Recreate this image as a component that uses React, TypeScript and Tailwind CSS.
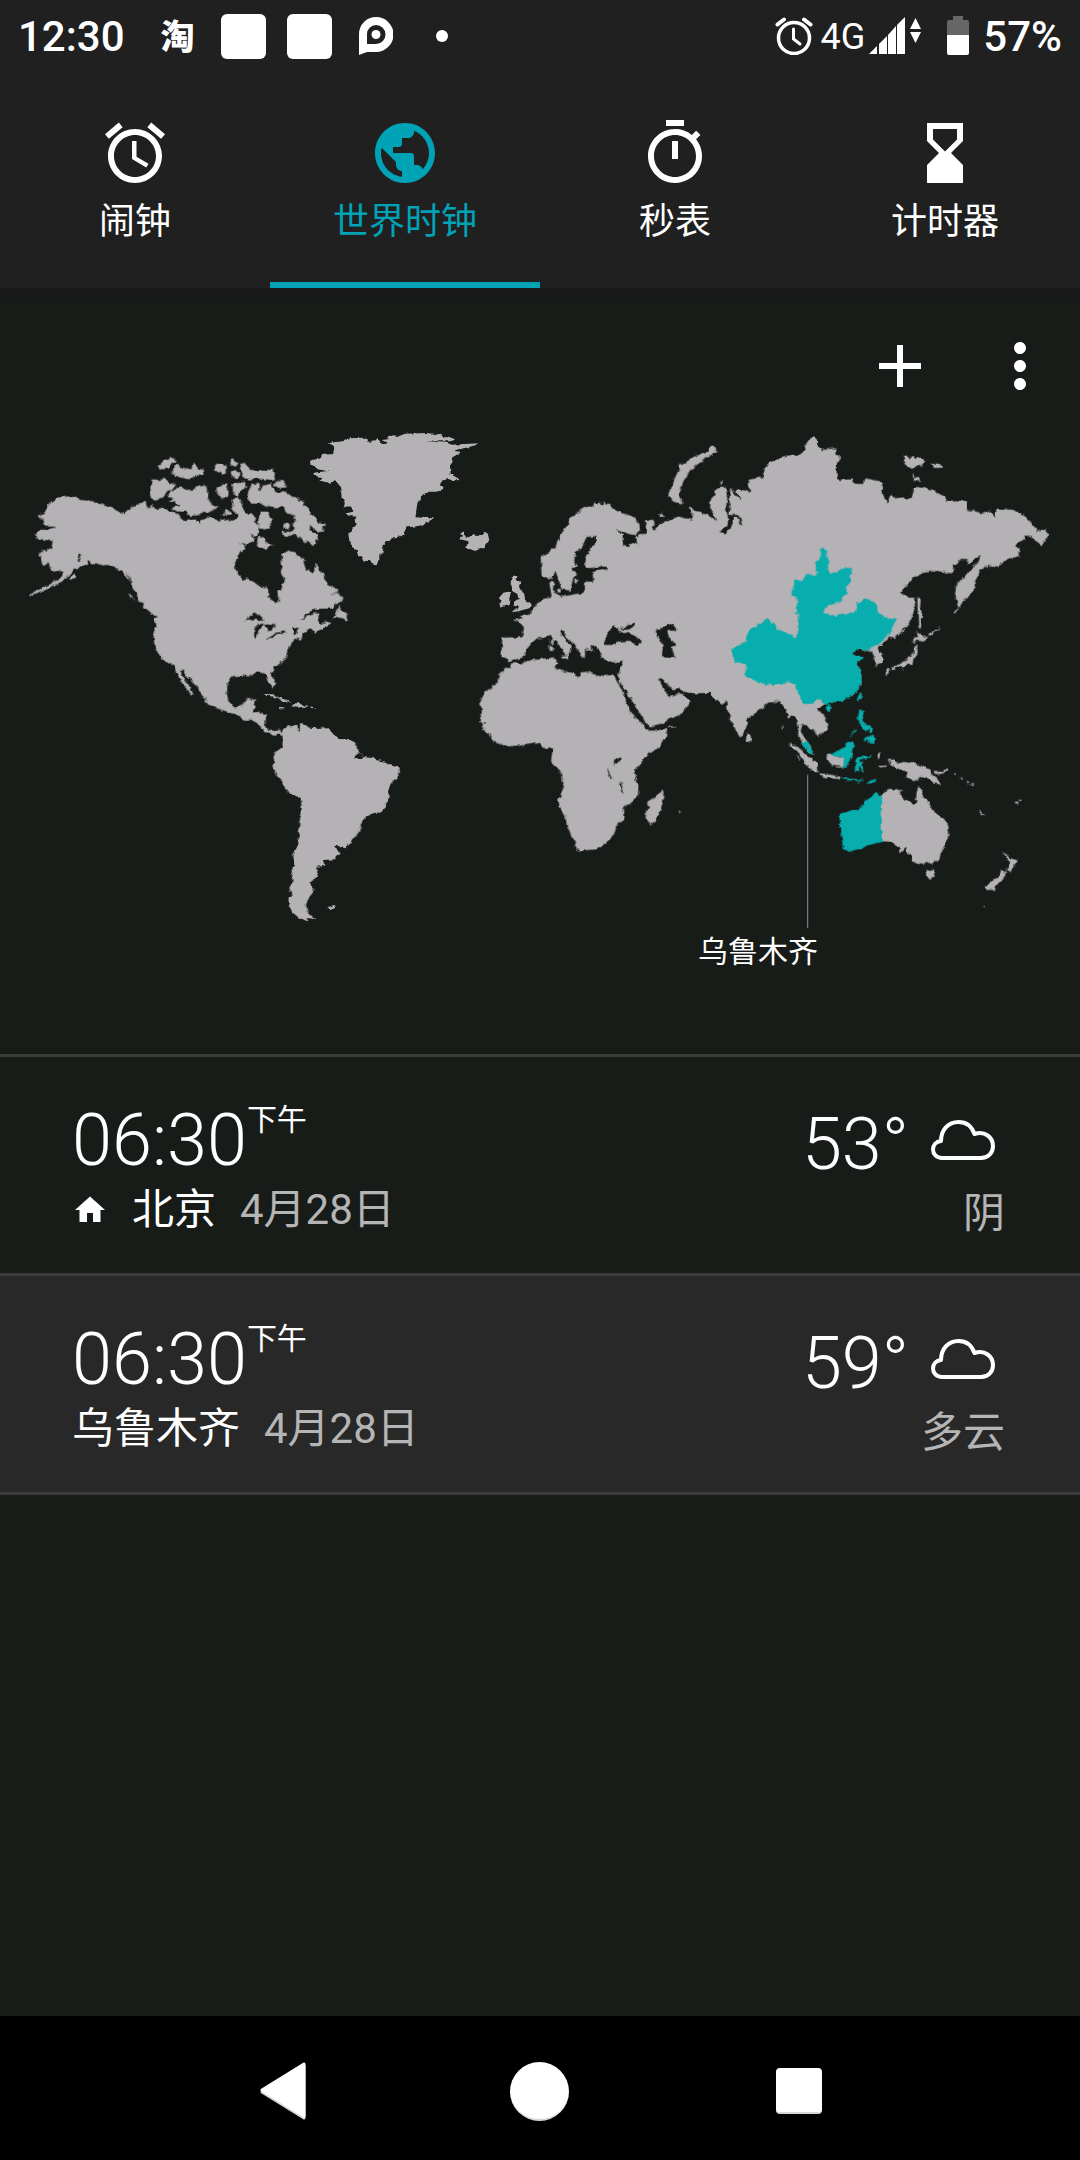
import { useState } from 'react';
import { MdAdd, MdAlarm, MdHourglassBottom, MdMoreVert, MdOutlineTimer, MdPublic } from 'react-icons/md';

const tabs = [
  { id: 'alarm', title: '闹钟', Icon: MdAlarm },
  { id: 'world', title: '世界时钟', Icon: MdPublic },
  { id: 'stopwatch', title: '秒表', Icon: MdOutlineTimer },
  { id: 'timer', title: '计时器', Icon: MdHourglassBottom },
];

interface City {
  name: string;
  time: string;
  period: string;
  date: string;
  temp: string;
  weather: string;
  home: boolean;
}

const cities: City[] = [
  { name: '北京', time: '06:30', period: '下午', date: '4月28日', temp: '53°', weather: '阴', home: true },
  { name: '乌鲁木齐', time: '06:30', period: '下午', date: '4月28日', temp: '59°', weather: '多云', home: false },
];

// 地图分块，每块有自己的原点；land 为陆地，sea 为湖泊和内海，active 为当前时区
interface Region {
  id: string;
  x: number;
  y: number;
  land: string[];
  sea?: string[];
  islands?: string[];
  active?: string[];
}

const regions: Region[] = [
  {
    id: 'north-america',
    x: 0,
    y: 0,
    land: [
      '195,286 200,294 210,290 230,293 240,300 262,302 280,308 295,308 315,318 330,320 345,330 365,338 376,342 380,332 400,318 418,312 425,312 436,304 440,318 448,326 455,312 462,326 485,320 510,334 520,336 535,345 545,358 560,360 580,356 595,364 598,376 602,362 625,352 645,358 665,362 690,360 700,362 712,356 715,340 700,334 694,325 700,315 697,300 712,290 722,305 728,325 742,345 752,342 765,352 762,365 775,375 778,390 770,410 748,400 765,415 755,425 745,430 715,430 738,436 735,448 722,452 712,470 705,490 706,512 722,528 724,540 740,535 760,545 780,560 800,562 808,575 806,590 815,600 828,610 837,603 832,575 845,565 852,535 842,515 848,500 845,490 846,470 840,458 855,458 870,453 885,458 900,476 915,480 912,492 918,508 935,518 945,510 950,490 958,508 968,520 975,540 985,555 1000,562 1015,568 1013,578 988,584 1015,580 1027,595 1022,606 1005,612 1000,625 960,626 935,632 915,644 900,662 925,648 940,640 958,640 950,658 960,672 980,664 992,670 975,678 968,690 945,698 942,686 920,692 908,702 905,718 885,716 875,725 872,735 862,740 862,755 858,775 840,790 825,800 818,808 814,822 825,850 820,866 810,855 803,835 797,824 785,818 765,818 758,825 742,830 735,826 715,828 700,828 690,836 683,850 680,880 684,900 690,912 705,922 720,916 730,914 738,898 768,896 764,918 755,940 780,938 796,942 799,950 795,980 810,994 825,990 840,990 850,1000 845,1008 835,1000 822,1008 812,1002 795,994 782,982 775,972 755,960 735,960 722,950 705,942 680,938 650,925 618,908 615,895 600,878 590,862 575,842 562,830 552,812 540,812 548,825 560,848 572,866 581,885 572,882 562,870 547,850 540,848 545,840 530,820 522,798 515,792 495,785 478,765 465,745 460,705 466,680 462,655 474,650 462,635 445,622 430,618 425,605 412,600 410,580 398,565 390,545 375,528 368,512 350,508 345,500 325,495 305,496 290,490 275,490 265,480 258,494 245,498 235,508 225,505 215,518 195,538 185,545 150,562 120,575 100,584 88,594 95,580 130,562 165,545 185,530 190,515 172,512 160,515 152,508 145,485 138,498 130,495 127,482 115,465 130,450 140,452 155,440 158,425 150,418 132,422 115,420 110,405 100,402 120,390 155,388 168,382 150,376 140,378 133,372 130,360 112,348 135,338 145,315 165,298 185,292',
      '428,617 445,620 462,628 476,650 462,646 448,634',
    ],
    sea: [
      '728,665 745,652 755,645 765,640 785,650 790,665 778,660 768,655 755,662 745,658',
      '762,685 775,672 792,672 785,682 775,690 772,712 765,716 762,705',
      '792,675 802,670 820,672 828,685 820,680 812,697 804,692 800,682',
      '798,716 815,706 830,698 858,690 858,697 835,702 820,713',
      '880,685 896,682 894,692 888,708 880,705',
      '240,460 246,464 238,480 232,484',
      '375,512 382,525 390,548 395,560 392,545 386,528',
    ],
    islands: [
      '458,238 480,240 492,236 510,248 528,256 515,270 500,272 492,290 468,302 450,288',
      '505,290 508,275 532,264 545,262 560,270 580,268 598,255 606,264 612,254 620,262 622,285 628,300 635,315 655,322 640,328 625,338 610,335 600,345 570,348 555,335 530,334 512,322 540,318 528,308 510,305 520,295',
      '472,200 485,188 495,178 505,180 512,170 528,172 528,188 512,192 505,205 490,208',
      '512,222 522,205 530,195 545,202 560,205 575,210 578,188 590,196 595,206 612,210 610,228 590,226 570,238 540,232 525,226',
      '645,192 665,190 680,196 680,218 665,228 660,215 645,212',
      '688,180 700,178 716,188 708,200 692,195',
      '720,192 735,188 746,200 745,210 790,212 820,208 828,235 820,242 800,238 770,235 750,238 730,234',
      '692,215 702,210 718,218 716,235 695,230',
      '650,262 662,258 668,250 685,252 680,270 688,288 665,298 650,278',
      '697,252 735,246 738,262 722,272 712,290 700,282',
      '745,270 760,252 780,252 778,268 785,295 778,300 780,275 788,258 815,250 820,262 828,278 860,275 872,290 892,292 900,302 915,302 912,315 925,325 930,340 945,350 955,368 978,372 965,385 970,392 955,398 930,375 930,388 952,405 955,420 945,418 948,432 940,438 920,424 915,430 895,408 880,402 860,408 842,402 846,394 875,396 884,385 880,372 888,360 880,345 862,345 850,320 830,325 800,320 790,312 750,310 742,292',
      '825,245 850,243 862,262 835,264 822,255',
      '780,335 810,335 808,350 820,358 808,370 810,385 795,388 778,385 772,360',
      '778,410 790,412 798,425 820,438 805,440 800,448 785,440 770,442',
      '660,345 672,342 680,325 696,344',
      '850,370 862,368 870,378 864,388 850,385',
      '1018,613 1014,632 1008,638 998,658 1018,652 1030,655 1040,662 1047,656 1040,652 1040,638 1025,635 1020,625',
      '210,530 225,524 228,532 212,540',
      '385,578 392,580 402,600 394,592',
    ],
  },
  {
    id: 'north-atlantic',
    x: 780,
    y: 0,
    land: [
      '203,130 230,126 255,122 265,115 318,113 322,125 348,124 352,113 358,125 372,133 380,128 365,120 385,118 388,108 408,106 412,110 435,101 500,99 540,103 545,110 560,108 585,118 575,124 500,124 560,128 575,134 655,130 645,136 625,142 600,148 582,156 602,158 595,168 582,166 575,178 578,188 570,200 572,222 582,222 595,240 575,244 560,238 545,242 540,255 550,270 528,275 510,275 485,285 472,310 466,352 495,354 525,352 505,365 490,375 460,380 440,382 430,402 410,415 395,415 390,422 372,428 368,455 358,462 358,480 350,493 335,488 325,480 315,485 295,465 290,450 280,445 275,430 268,422 265,400 275,395 275,382 288,378 284,360 290,350 270,348 258,340 280,335 268,322 252,325 255,302 245,290 240,262 225,240 215,248 195,246 175,240 185,232 162,225 160,218 210,212 170,205 152,192 150,182 180,175 185,165 218,162 225,140',
      '600,400 612,398 614,408 625,412 640,404 665,405 675,398 684,405 688,420 675,440 645,453 632,448 612,440 624,432 612,422 598,415 610,412',
      '755,532 772,528 770,540 784,545 778,560 790,580 792,598 812,612 808,625 780,632 758,637 775,620 762,616 768,600 776,598 772,582 760,574 752,550',
      '730,578 752,574 750,590 746,612 722,620 718,612 728,602 716,595',
    ],
  },
  {
    id: 'africa',
    x: 1350,
    y: 720,
    land: [
      '183,70 215,70 240,60 270,58 315,52 322,68 313,82 345,95 365,98 385,112 393,97 415,95 430,102 465,108 490,104 497,118 515,150 530,190 545,222 562,240 578,250 590,272 620,272 652,265 648,290 630,318 585,352 560,385 552,400 558,425 565,435 564,468 545,485 518,505 522,540 498,556 497,572 482,595 455,620 440,628 390,632 380,628 376,610 370,595 352,562 345,525 328,498 325,480 342,440 335,425 333,398 318,380 303,365 308,325 298,318 290,325 275,322 270,308 245,308 215,316 165,320 145,310 125,297 118,283 100,266 88,240 96,215 90,188 108,155 125,140 138,130 148,115 150,98 170,85 182,78',
      '635,448 643,470 630,515 618,545 602,553 587,535 588,510 597,500 592,485 620,470',
      '685,515 692,515 690,520',
      '655,260 680,258 678,262 660,263',
    ],
    sea: [
      '492,355 512,352 510,362 502,374 492,372',
      '472,380 478,398 486,418 480,415 474,395',
      '510,426 517,432 516,448 521,462 514,455',
      '90,249 110,250 112,253 92,253',
    ],
  },
  {
    id: 'south-america',
    x: 600,
    y: 780,
    land: [
      '246,212 262,200 275,198 290,194 296,208 302,204 298,192 318,196 328,203 345,205 375,202 390,214 405,228 415,237 440,238 460,246 470,258 472,275 490,288 520,292 525,300 560,305 578,318 598,322 600,340 592,352 568,380 565,415 555,440 542,457 520,460 500,468 487,482 485,500 465,530 450,552 438,562 405,557 418,578 405,598 372,600 372,618 348,620 355,640 345,660 330,666 332,680 345,690 325,715 318,735 322,755 345,776 320,775 325,785 295,772 280,760 268,740 265,715 275,708 268,685 278,672 275,630 282,620 280,585 295,550 298,490 305,455 303,418 265,398 240,360 225,330 216,318 226,305 220,295 228,275 247,262 248,235',
      '188,108 200,102 218,103 250,116 272,128 248,126 235,114 212,108',
      '280,130 300,130 322,140 305,140 290,143 276,138',
      '240,140 252,142 252,146 240,144',
      '332,140 344,141 342,145 332,144',
      '385,742 400,735 411,738 395,746 388,744',
    ],
    sea: ['462,290 475,280 490,288 485,296 465,294', '293,198 300,200 298,212 293,208'],
  },
  {
    id: 'europe',
    x: 1410,
    y: 0,
    land: [
      '345,322 370,318 372,306 380,315 388,304 395,316 402,304 408,314 420,315 440,333 475,345 492,352 508,372 510,390 495,405 475,402 438,384 458,402 458,430 468,440 480,440 476,428 505,432 498,412 508,402 532,402 528,360 550,360 555,372 545,378 550,392 570,372 595,360 625,350 665,358 670,345 655,320 665,322 672,332 690,335 715,347 738,362 730,338 720,325 722,300 735,288 738,270 750,258 768,262 772,290 785,262 795,290 815,300 795,275 810,268 840,275 858,290 855,320 863,305 855,285 840,270 835,240 885,232 880,210 895,200 900,188 920,180 945,168 990,165 1008,150 1005,138 1020,118 1030,113 1045,125 1040,135 1055,150 1100,148 1100,800 1000,870 722,876 640,876 600,885 580,865 480,870 450,830 462,822 468,780 430,788 395,775 388,752 375,738 360,742 372,755 352,750 345,745 345,775 332,765 318,742 322,738 300,722 285,708 282,692 270,692 280,712 305,740 300,762 285,765 278,745 250,720 240,705 225,712 200,715 180,735 168,745 165,768 150,775 120,785 110,778 95,772 97,712 155,712 162,682 150,668 132,660 155,655 150,648 175,645 205,610 215,598 245,590 238,548 250,540 245,532 232,536 215,528 212,475 235,455 255,442 275,400 290,378 305,350 325,335',
      '735,140 740,155 715,170 690,188 665,205 650,225 635,255 628,285 642,310 625,308 610,305 597,288 605,262 612,245 618,225 630,205 628,195 655,182 680,165 710,155 720,140',
      '568,342 578,338 582,348 570,352',
      '240,718 248,716 248,732 240,732',
      '238,738 248,736 250,752 240,756',
      '272,768 298,764 296,778 280,774',
      '752,245 757,242 758,250 750,250',
    ],
    sea: [
      '256,512 268,545 276,568 300,572 308,542 322,522 306,512 306,500 324,500 312,482 318,455 335,445 345,420 352,409 375,409 378,428 355,455 345,490 352,505 390,500 412,500 415,507 388,512 368,516 370,545 358,545 345,545 344,572 330,580 275,590 250,576 254,550 246,540',
      '400,735 412,702 432,678 445,690 462,700 475,696 510,718 512,732 500,735 475,722 452,724 430,735',
      '445,684 465,684 475,672 494,670 480,688 465,690',
      '558,688 575,684 598,670 612,676 620,692 605,688 592,695 600,720 618,735 605,740 614,775 580,772 575,760 582,738 565,712',
      '568,836 585,840 598,862 612,870 630,865 640,880 660,892 640,890 630,880 615,888 598,884 588,866 574,856',
      '768,262 778,275 780,300 775,345 805,345 815,368 818,378 808,365 800,352 788,352 788,372 768,400 748,396 772,378 775,358 768,325 772,300',
    ],
    islands: ['312,545 318,535 324,538 318,552', '258,568 272,566 272,578 260,576'],
  },
  {
    id: 'arabia',
    x: 1350,
    y: 720,
    land: [
      '505,105 520,55 780,55 800,100 812,185 800,180 778,157 740,160 710,157 690,145 700,165 722,182 708,208 680,228 640,248 596,262 582,240 575,222 560,208 552,188 535,168 515,135 512,125 508,138',
    ],
    sea: ['628,116 640,115 655,140 668,148 690,143 702,160 680,162 660,168 645,158 636,138'],
  },
  {
    id: 'siberia',
    x: 2160,
    y: 0,
    land: [
      '90,240 130,232 130,210 150,188 200,168 240,165 258,148 255,138 270,115 285,113 295,125 290,135 305,152 335,145 355,165 358,182 345,205 325,225 300,242 282,264 305,250 340,232 360,240 395,238 405,252 430,252 440,235 485,245 490,290 503,307 513,284 520,292 545,290 560,298 575,292 585,260 620,265 650,272 660,285 675,292 680,305 735,303 742,312 742,335 760,332 790,340 810,333 825,352 830,325 880,330 905,345 925,358 950,388 955,395 975,388 980,398 990,405 975,422 965,437 940,415 915,403 912,418 888,432 895,445 900,467 870,475 850,485 830,503 810,497 785,505 775,525 765,540 768,560 755,575 742,595 730,602 715,627 705,580 710,550 725,540 750,510 775,488 782,466 765,472 760,485 740,497 742,480 720,480 702,498 695,520 650,513 600,520 575,540 540,578 560,590 582,590 585,620 575,655 550,690 525,717 505,712 490,730 475,740 478,752 488,765 488,790 468,797 465,770 450,750 430,756 420,740 395,760 415,775 410,790 425,825 425,850 400,885 360,895 -20,850 90,400',
      '592,590 602,598 600,622 610,652 600,656 604,680 595,682 593,640',
      '592,692 605,705 625,712 605,725 590,718 580,730 580,716 592,710',
      '580,738 592,735 592,765 582,772 578,792 560,792 550,805 540,798 515,804 545,786 560,782 565,772 580,762',
      '495,808 508,806 505,820 500,830',
      '512,800 528,797 525,806 515,810',
      '552,168 562,166 568,178 582,168 588,178 600,172 616,185 605,200 592,196 575,207 553,192',
      '630,188 660,192 668,203 645,204',
      '580,235 595,230 604,246 582,242',
      '578,222 584,222 584,230 578,230',
      '625,702 660,682 662,685 628,708',
      '700,638 712,626 714,630 704,640',
    ],
  },
  {
    id: 'asia-pacific',
    x: 2100,
    y: 720,
    land: [
      '-40,60 380,60 400,187 375,192 352,208 360,218 378,235 384,268 352,288 345,275 330,268 318,254 306,252 302,275 318,300 330,315 340,345 322,335 306,302 294,285 297,265 290,235 282,226 265,235 258,212 236,180 225,186 205,187 190,200 165,220 142,235 138,265 120,293 108,272 85,222 78,180 70,195 62,192 48,178 30,158 -40,157',
      '140,282 150,286 155,300 148,308 138,304',
      '266,312 290,316 320,345 352,370 356,395 345,397 325,380 310,362 295,340',
      '355,400 385,402 405,407 425,412 420,418 385,413 358,408',
      '380,342 392,340 402,348 428,350 434,372 425,380 400,378 385,364',
      '562,360 585,358 592,372 610,366 650,372 688,388 692,400 710,415 725,433 700,430 680,412 660,412 655,422 635,418 618,412 625,398 605,388 592,385 570,375 572,368',
      '700,396 728,395 738,384 742,390 728,402 705,402',
      '532,345 540,335 542,350 536,360',
      '535,378 560,376 560,380 538,382',
      '540,474 552,455 570,445 578,452 605,450 600,468 615,480 640,492 648,485 650,455 656,437 665,455 670,472 682,480 690,503 712,520 735,540 745,558 748,590 735,620 722,640 718,660 690,672 680,665 672,672 645,667 635,655 635,642 620,638 618,620 602,637 595,620 580,610 560,604 540,604',
      '675,690 690,693 705,688 705,705 690,720 682,710',
      '908,630 920,645 930,655 938,655 953,662 945,675 932,697 918,690 925,680 928,668 920,655',
      '905,690 918,695 915,708 895,730 885,750 865,750 856,742 870,728 895,710',
      '834,510 842,513 858,525 850,525',
      '945,488 955,487 955,493 946,493',
      '955,482 965,478 965,482 957,485',
      '760,398 768,402 766,406',
      '780,410 792,416 790,420',
      '798,420 808,426 804,430',
      '812,428 822,432 820,436',
      '248,250 250,268 245,268',
      '290,345 300,360 296,362',
      '850,797 856,799 852,802',
    ],
    active: [
      '378,200 388,194 396,206 385,216 378,210',
      '476,165 486,158 484,172 476,182 472,175',
      '475,212 490,212 490,235 486,245 502,255 492,258 478,248 470,232',
      '486,255 498,250 512,258 518,275 508,280 505,268 498,278 490,268',
      '488,300 500,290 520,284 525,300 522,310 510,310 505,300',
      '448,290 465,268 468,270 452,290',
      '306,304 325,305 340,345 322,335',
      '388,344 402,340 418,330 430,320 445,305 458,308 465,318 456,330 458,348 445,368 440,382 426,384 432,372 428,350 402,348',
      '465,365 472,350 505,350 515,343 512,352 480,358 478,365 495,364 484,372 495,395 486,392 478,376 476,396 465,396',
      '425,412 450,416 490,418 490,422 450,421 428,418',
      '500,430 510,422 530,416 525,424 505,434',
      '470,425 480,428 475,430',
      '545,470 535,462 530,458 520,465 508,475 495,482 488,490 480,505 450,512 422,522 416,530 420,550 418,560 425,580 430,605 430,628 448,636 470,628 490,626 510,615 545,605',
    ],
  },
  {
    id: 'china',
    x: 2220,
    y: 720,
    land: [],
    active: [
      '250,-280 258,-275 262,-250 268,-235 262,-215 270,-203 290,-202 300,-212 310,-215 318,-220 332,-216 335,-204 342,-198 330,-190 332,-175 325,-165 318,-155 324,-140 305,-130 300,-115 275,-105 255,-96 252,-82 285,-72 330,-80 345,-85 352,-112 380,-123 405,-112 415,-82 430,-72 445,-65 472,-62 460,-45 452,-25 420,10 385,28 370,36 365,20 335,40 352,50 370,50 350,72 365,102 365,128 355,148 340,165 310,182 280,187 258,195 245,180 228,178 215,188 195,190 178,172 172,150 165,135 145,125 130,132 100,137 72,132 40,120 10,105 20,90 15,72 -15,65 -30,30 20,5 25,-28 40,-34 52,-48 62,-46 78,-65 100,-50 110,-35 140,-22 168,-5 175,-40 178,-78 160,-80 172,-86 170,-95 175,-120 152,-132 160,-148 163,-180 185,-182 205,-198 228,-196 230,-204 225,-230 240,-248 240,-270',
    ],
  },
];

function WorldMap() {
  return (
    <svg viewBox="0 78 3240 1506" className="block w-full" role="img" aria-label="世界地图">
      {/* 给海岸线加一点锯齿 */}
      <filter id="coast" filterUnits="userSpaceOnUse" x="0" y="78" width="3240" height="1506" colorInterpolationFilters="sRGB">
        <feTurbulence type="fractalNoise" baseFrequency="0.06" numOctaves="2" seed="4" result="noise" />
        <feDisplacementMap in="SourceGraphic" in2="noise" scale="14" xChannelSelector="R" yChannelSelector="G" />
      </filter>
      <g filter="url(#coast)">
        {regions.map((region) => (
          <g key={region.id} transform={`translate(${region.x} ${region.y})`}>
            {region.land.map((points) => (
              <polygon key={points} points={points} fill="#b5b2b5" />
            ))}
            {region.sea?.map((points) => (
              <polygon key={points} points={points} fill="#181c19" />
            ))}
            {region.islands?.map((points) => (
              <polygon key={points} points={points} fill="#b5b2b5" />
            ))}
            {region.active?.map((points) => (
              <polygon key={points} points={points} fill="#08aeae" />
            ))}
          </g>
        ))}
      </g>
      <path d="M2422 1125V1584" stroke="#b5b5b5" strokeWidth="3" />
    </svg>
  );
}

function StatusBar() {
  return (
    <div className="flex h-[72px] items-center justify-between px-[18px] text-[42px] font-medium leading-[72px]">
      <div className="flex items-center">
        <span className="pt-0.5">12:30</span>
        <span className="ml-9 pt-0.5 text-[34px] font-black">淘</span>
        <span className="ml-[26px] size-[45px] rounded-md bg-white" />
        <span className="ml-[21px] size-[45px] rounded-md bg-white" />
        <svg viewBox="0 0 34 38" className="ml-[27px] h-[38px] w-[34px]" aria-hidden="true">
          <path
            fillRule="evenodd"
            fill="#fff"
            d="M17 0a17 17 0 0 1 0 35H8L0 38V17A17 17 0 0 1 17 0ZM17 8a9 9 0 0 0-9 9v10h9a9.500 9.500 0 0 0 0-19Z"
          />
          <circle cx="17" cy="17.500" r="4.500" fill="#fff" />
        </svg>
        <span className="ml-[43px] size-3 rounded-full bg-white" />
      </div>
      <div className="flex items-center">
        <svg viewBox="0 0 38 38" className="size-[38px]" fill="none" stroke="#fff" strokeLinecap="round" aria-hidden="true">
          <ellipse cx="19" cy="21" rx="15.500" ry="15.500" strokeWidth="3.500" />
          <path d="M18.500 12v10l6.500 5" strokeWidth="3" />
          <path d="M2.500 7.500 9 2.500M35.500 7.500 29 2.500" strokeWidth="4" />
        </svg>
        <span className="ml-2 pt-0.5 text-[36px] font-normal">4G</span>
        <svg viewBox="0 0 54 38" className="ml-1 h-[38px] w-[54px]" fill="#fff" aria-hidden="true">
          <path d="M0 37 8 29v8ZM10 27l8-8v18h-8ZM19 18l8-9v28h-8ZM28 8l8-8v37h-8Z" />
          <path d="M41 12 46.500 1 52 12ZM41 15h11l-5.500 11Z" />
        </svg>
        <svg viewBox="0 0 22 40" className="ml-6 h-10 w-[22px]" aria-hidden="true">
          <path d="M6 0h10v4h4a2 2 0 0 1 2 2v14H0V6a2 2 0 0 1 2-2h4Z" fill="#666" />
          <path d="M0 19h22v18a2 2 0 0 1-2 2H2a2 2 0 0 1-2-2Z" fill="#fff" />
        </svg>
        <span className="ml-[14px] pt-0.5">57%</span>
      </div>
    </div>
  );
}

function CloudIcon() {
  return (
    <svg viewBox="0 0 64 42" className="mt-4 h-[42px] w-16" fill="none" stroke="#fff" strokeWidth="4" aria-hidden="true">
      <path
        strokeLinejoin="round"
        d="M11 39C5.500 39 2 35 2 30.500C2 26 5 22.500 10 22C10 11 17 3 27.500 3C36 3 41 8 43.500 15C54 11.500 62 18.500 62 27C62 34 57 39 50 39Z"
      />
    </svg>
  );
}

function CityRow({ city }: { city: City }) {
  return (
    <li
      className={`flex h-[219px] items-start justify-between border-t-[3px] border-[#3a3d3a] pl-[72px] pr-[75px] ${
        city.home ? 'bg-[#181c19]' : 'bg-[#282828]'
      }`}
    >
      <div className="pt-[42px]">
        <div className="flex items-start">
          <span className="text-[72px] font-light leading-[84px]">{city.time}</span>
          <span className="text-[30px] leading-[42px]">{city.period}</span>
        </div>
        <div className="flex items-center gap-6 text-[42px] leading-[54px]">
          {city.home && (
            <svg viewBox="0 0 24 24" className="size-9" fill="#fff" aria-hidden="true">
              <path d="M10 20v-6h4v6h5v-8h3L12 3 2 12h3v8z" />
            </svg>
          )}
          <span>{city.name}</span>
          <span className="text-[#b5b5b5]">{city.date}</span>
        </div>
      </div>
      <div className="flex flex-col items-end pt-[46px]">
        <div className="flex items-start gap-[22px] pr-[10px]">
          <span className="text-[72px] font-light leading-[84px]">{city.temp}</span>
          <CloudIcon />
        </div>
        <span className="text-[42px] leading-[54px] text-[#b5b5b5]">{city.weather}</span>
      </div>
    </li>
  );
}

export default function App() {
  const [activeTab, setActiveTab] = useState('world');

  return (
    <div className="flex min-h-screen flex-col bg-[#181c19] font-['Roboto','Noto_Sans_CJK_SC',sans-serif] text-white">
      <header className="bg-[#202020]">
        <StatusBar />
        <nav className="grid h-[216px] grid-cols-4">
          {tabs.map(({ id, title, Icon }) => (
            <button
              key={id}
              type="button"
              onClick={() => setActiveTab(id)}
              className={`flex flex-col items-center border-b-[6px] pt-[45px] text-[36px] leading-[66px] ${
                activeTab === id ? 'border-[#00a3b6] text-[#00a3b6]' : 'border-transparent text-white'
              }`}
            >
              <Icon className="size-[72px]" />
              <span>{title}</span>
            </button>
          ))}
        </nav>
      </header>

      <main className="flex-1">
        <div className="h-3 bg-[#191919]" />
        <div className="flex justify-end pt-[6px]">
          <button type="button" aria-label="添加城市" className="flex size-[120px] items-center justify-center">
            <MdAdd className="size-[72px]" />
          </button>
          <button type="button" aria-label="更多" className="flex size-[120px] items-center justify-center">
            <MdMoreVert className="size-[72px]" />
          </button>
        </div>
        <WorldMap />
        <p className="pb-[78px] pr-[262px] text-right text-[30px] leading-[48px]">乌鲁木齐</p>
        <ul className="border-b-[3px] border-[#3a3d3a]">
          {cities.map((city) => (
            <CityRow key={city.name} city={city} />
          ))}
        </ul>
      </main>

      <footer className="grid h-36 grid-cols-3 bg-black px-[14%] pt-[6px]">
        <button type="button" aria-label="返回" className="flex items-center justify-center pl-1">
          <svg viewBox="0 0 46 58" className="h-[58px] w-[46px]" strokeLinejoin="round" aria-hidden="true">
            <path d="M44 4v52L2 30Z" fill="#d8d8d8" stroke="#d8d8d8" strokeWidth="3" />
            <path d="M44 2v52L2 28Z" fill="#fff" stroke="#fff" strokeWidth="3" />
          </svg>
        </button>
        <button type="button" aria-label="主页" className="flex items-center justify-center">
          <span className="size-[59px] rounded-full border-b-2 border-[#d8d8d8] bg-white" />
        </button>
        <button type="button" aria-label="最近任务" className="flex items-center justify-center">
          <span className="size-[46px] rounded border-b-2 border-[#d8d8d8] bg-white" />
        </button>
      </footer>
    </div>
  );
}
